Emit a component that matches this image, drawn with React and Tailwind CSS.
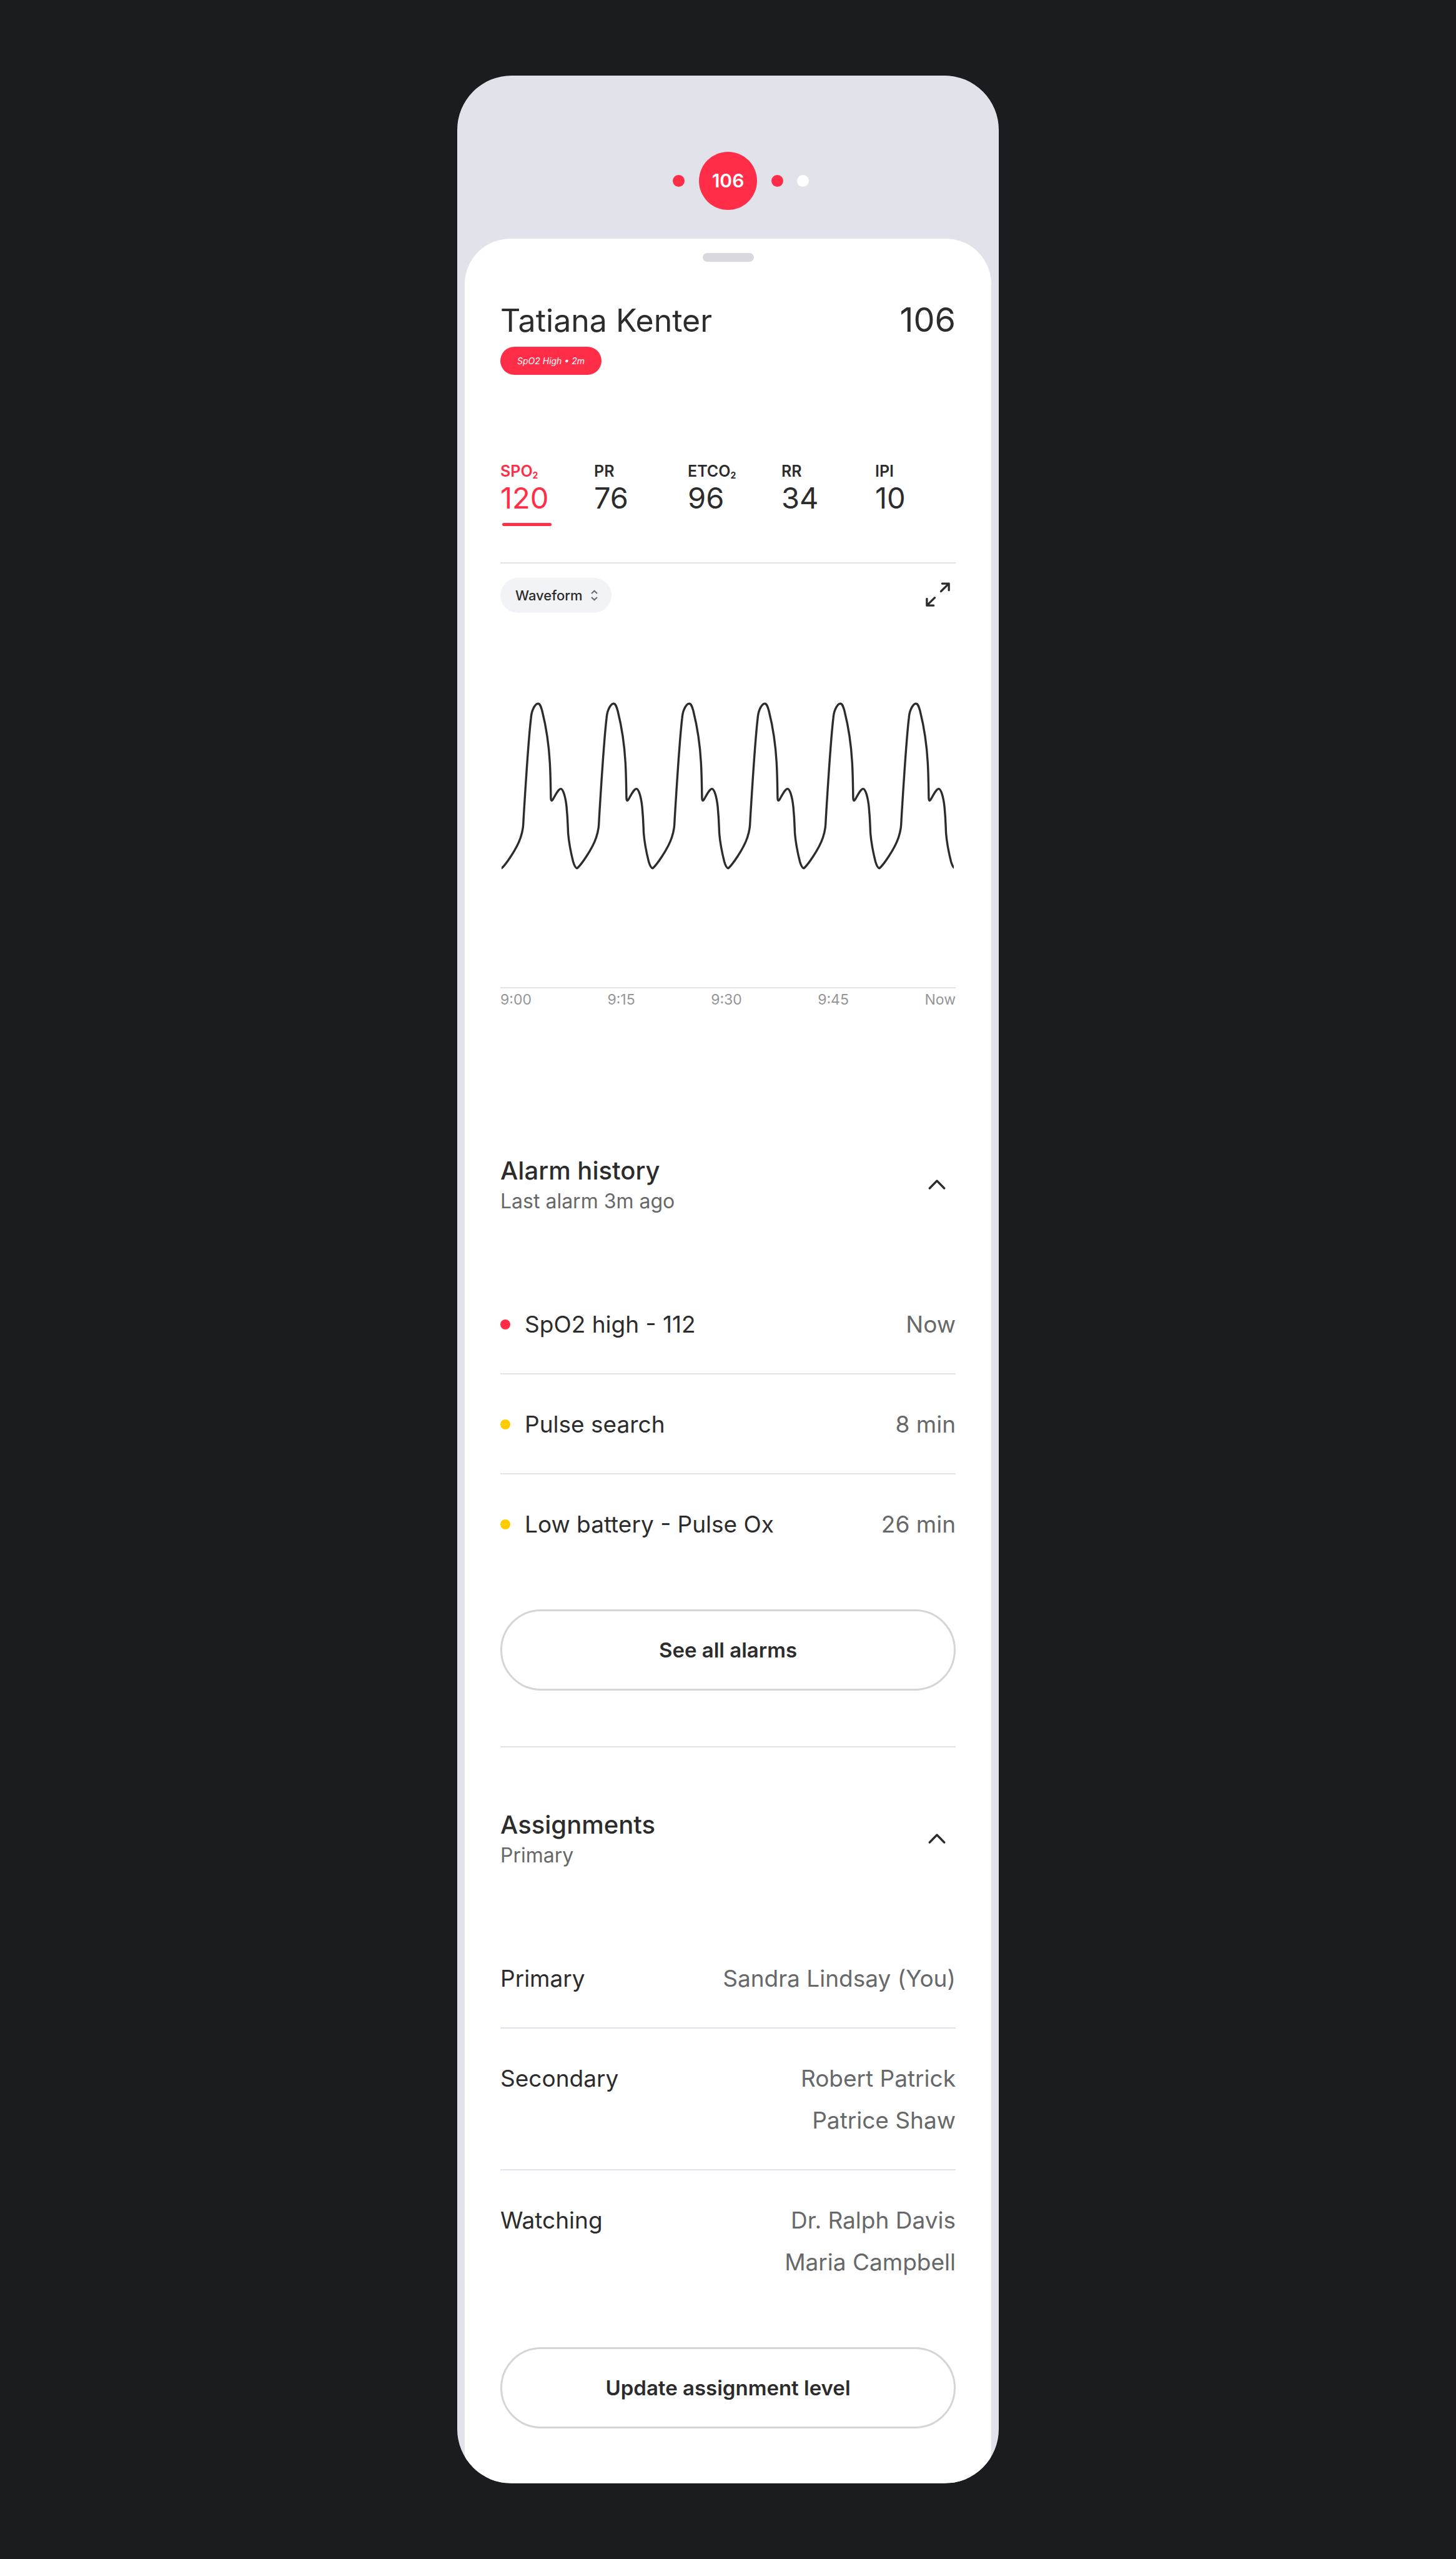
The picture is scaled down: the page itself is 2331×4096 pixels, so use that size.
const metrics = [
  { label: "SPO", sub: "2", value: "120", active: true },
  { label: "PR", value: "76" },
  { label: "ETCO", sub: "2", value: "96" },
  { label: "RR", value: "34" },
  { label: "IPI", value: "10" },
];

const alarms = [
  { name: "SpO2 high - 112", time: "Now", dot: "bg-[#ff2d48]" },
  { name: "Pulse search", time: "8 min", dot: "bg-[#ffcc00]" },
  { name: "Low battery - Pulse Ox", time: "26 min", dot: "bg-[#ffcc00]" },
];

const assignments = [
  { level: "Primary", people: ["Sandra Lindsay (You)"] },
  { level: "Secondary", people: ["Robert Patrick", "Patrice Shaw"] },
  { level: "Watching", people: ["Dr. Ralph Davis", "Maria Campbell"] },
];

// One heartbeat of the pleth wave, 121 units wide.
const beat =
  "M0 265.6 C5 262 24 236 30.5 216.5 C34.5 204 34.7 198 35.2 186 C38 140 43 60 47 26 C47.8 17 48.5 15.5 50 12 C52.5 6 55 2.2 58.2 2.2 C62 2.2 63.5 8.5 65 14 C70.5 36 75.5 64 77.3 97 C78.6 121 78.6 140 78.9 153 C79 157.5 80.2 158.6 82.3 155.4 C86 149 91 138.6 94.9 138.6 C98.5 138.6 102.5 152 104.1 168 C106.3 191 106 200 106.6 210 C107.5 221 110.5 239 114.5 254.9 C116.5 261.5 118.8 265.6 121 265.6";

function Waveform() {
  return (
    <svg viewBox="0 0 724 270" className="block h-auto w-full" role="img" aria-label="SpO2 waveform">
      <g fill="none" stroke="#2c2c2d" strokeWidth="3.4" strokeLinecap="round" strokeLinejoin="round">
        {[0, 1, 2, 3, 4, 5].map((i) => (
          <path key={i} d={beat} transform={`translate(${i * 121} 0)`} />
        ))}
      </g>
    </svg>
  );
}

function SectionHeader({ title, subtitle }) {
  return (
    <div className="flex items-center justify-between">
      <div>
        <h2 className="text-[40px] leading-[50px] font-medium">{title}</h2>
        <p className="mt-1 text-[32px] leading-[40px] text-[#666869]">{subtitle}</p>
      </div>
      <button type="button" aria-label={`Collapse ${title}`} className="flex h-12 w-[60px] items-center justify-center">
        <svg viewBox="0 0 28 16" className="h-4 w-7" fill="none" stroke="#2c2c2d" strokeWidth="3.4" strokeLinecap="round" strokeLinejoin="round">
          <path d="M2.3 14L14 2l11.7 12" />
        </svg>
      </button>
    </div>
  );
}

function OutlineButton({ children }) {
  return (
    <button type="button" className="mt-[58px] h-[130px] w-full rounded-full border-[3px] border-[#d5d5d5] text-[33px] leading-[40px] font-semibold">
      {children}
    </button>
  );
}

export default function App() {
  return (
    <main className="flex min-h-screen justify-center bg-[#1b1c20] py-[121px] font-['Inter',sans-serif] text-[#2c2c2d]">
      <div className="w-full max-w-[867px] overflow-hidden rounded-[87px] bg-[#e2e3ea] px-3">
        <nav aria-label="Patients" className="flex h-[261px] items-start pt-[122px]">
          <div className="flex h-[93px] flex-1 items-center justify-end pr-[23px]">
            <span className="size-[19px] rounded-full bg-[#ff2d48]" />
          </div>
          <button type="button" className="size-[93px] rounded-full bg-[#ff2d48] text-[30px] font-semibold text-white">106</button>
          <div className="flex h-[93px] flex-1 items-center gap-[22px] pl-[23px]">
            <span className="size-[19px] rounded-full bg-[#ff2d48]" />
            <span className="size-[19px] rounded-full bg-white" />
          </div>
        </nav>

        <section className="rounded-t-[73px] bg-white px-[57px] pt-[23px] pb-[87px]">
          <div className="mx-auto h-[14px] w-[82px] rounded-full bg-[#d9d8de]" />

          <header className="mt-[61px]">
            <div className="flex items-baseline justify-between leading-[64px]">
              <h1 className="text-[50px]">Tatiana Kenter</h1>
              <span className="text-[54px]">106</span>
            </div>
            <span className="mt-[10px] inline-flex h-[45px] items-center rounded-full bg-[#ff2d48] px-[27px] align-top text-[14px] leading-5 text-white italic">
              SpO2 High • 2m
            </span>
          </header>

          <div role="tablist" aria-label="Vital signs" className="mt-[139px] flex">
            {metrics.map((m) => (
              <button
                key={m.label}
                type="button"
                role="tab"
                aria-selected={Boolean(m.active)}
                className={m.active ? "w-[150px] shrink-0 text-left text-[#ff2d48]" : "w-[150px] shrink-0 text-left last:w-auto"}
              >
                <span className="block text-[25px] leading-[30px] font-semibold">
                  {m.label}
                  {m.sub && <sub className="bottom-[-3px] text-[14px] leading-none font-bold">{m.sub}</sub>}
                </span>
                <span className="block text-[47px] leading-[56px]">{m.value}</span>
                <span className={m.active ? "mt-3 ml-[3px] block h-[5px] w-[79px] rounded-full bg-[#ff2d48]" : "mt-3 block h-[5px]"} />
              </button>
            ))}
          </div>

          <div className="mt-[58px] flex items-start justify-between border-t-2 border-[#e2e3ea] pt-[23px]">
            <div className="relative">
              <select aria-label="Chart type" className="h-14 appearance-none rounded-full bg-[#f2f3f7] pr-[46px] pl-6 text-[22px] font-medium">
                <option>Waveform</option>
              </select>
              <svg viewBox="0 0 11 18" className="pointer-events-none absolute top-[19px] right-[22px] h-[18px] w-[11px]" fill="none" stroke="#6b6c6e" strokeWidth="2.2">
                <path d="M1 6l4.500-4.300L10 6M1 12l4.500 4.300L10 12" />
              </svg>
            </div>
            <button type="button" aria-label="Expand chart" className="flex h-[52px] items-center pr-2">
              <svg viewBox="62 73 201 201" className="size-[41px]" fill="none" stroke="#2c2c2d" strokeWidth="16" strokeLinecap="round" strokeLinejoin="round">
                <path d="M196 88H249V140M249 88L187 149M76 207V260H129M76 260L138 199" />
              </svg>
            </button>
          </div>

          <div className="mt-[143px] pr-[3px] pl-[2px]">
            <Waveform />
          </div>
          <div className="mt-[186px] flex justify-between border-t-2 border-[#e2e3ea] pt-1 text-[23px] leading-[28px] text-[#949597]">
            <span>9:00</span>
            <span>9:15</span>
            <span>9:30</span>
            <span>9:45</span>
            <span>Now</span>
          </div>

          <section className="mt-[235px]">
            <SectionHeader title="Alarm history" subtitle="Last alarm 3m ago" />
            <ul className="mt-[97px] divide-y-2 divide-[#e2e3ea]">
              {alarms.map((a) => (
                <li key={a.name} className="flex items-center pt-[46px] pb-[45px] text-[37px] leading-[67px]">
                  <span className={`mr-[23px] size-4 rounded-full ${a.dot}`} />
                  <span className="flex-1">{a.name}</span>
                  <span className="text-[#666869]">{a.time}</span>
                </li>
              ))}
            </ul>
            <OutlineButton>See all alarms</OutlineButton>
          </section>

          <section className="mt-[89px] border-t-2 border-[#e2e3ea] pt-[99px]">
            <SectionHeader title="Assignments" subtitle="Primary" />
            <dl className="mt-[97px] divide-y-2 divide-[#e2e3ea]">
              {assignments.map((a) => (
                <div key={a.level} className="flex justify-between pt-[46px] pb-[45px] text-[37px] leading-[67px]">
                  <dt>{a.level}</dt>
                  <dd className="text-right text-[#666869]">
                    {a.people.map((p) => (
                      <p key={p}>{p}</p>
                    ))}
                  </dd>
                </div>
              ))}
            </dl>
            <OutlineButton>Update assignment level</OutlineButton>
          </section>
        </section>
      </div>
    </main>
  );
}
